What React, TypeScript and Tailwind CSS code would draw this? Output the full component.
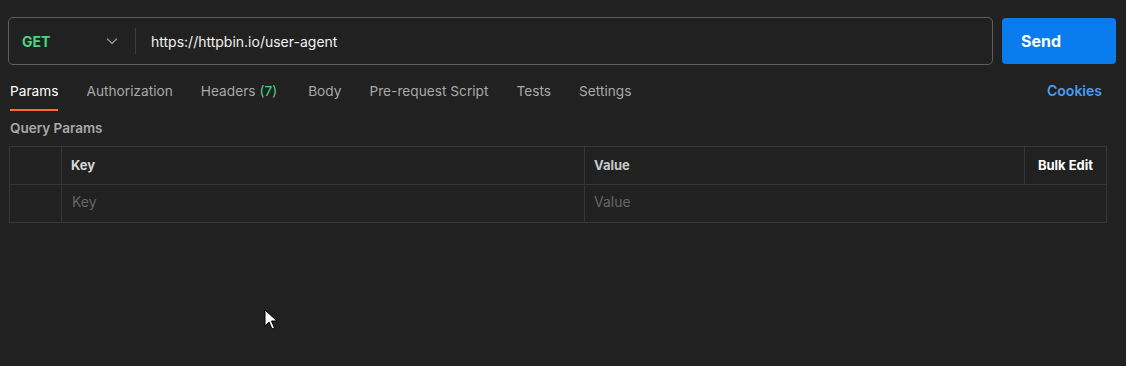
import React from "react";

const tabs = ["Params", "Authorization", "Headers", "Body", "Pre-request Script", "Tests", "Settings"];

export default function App() {
  return (
    <div
      className="relative w-[1126px] h-[366px] bg-[#212121] overflow-hidden"
      style={{ fontFamily: "Inter, 'Noto Sans', sans-serif" }}
    >
      {/* URL row */}
      <div className="flex items-center pt-[17px] pl-[8px]">
        <div className="flex items-center w-[985px] h-[48px] border border-[#5e5e5e] rounded-[5px]">
          <div className="flex items-center w-[126px] pl-[13px] pr-[16px] justify-between">
            <span className="text-[14px] font-bold text-[#4fd182]">GET</span>
            <svg width="14" height="14" viewBox="0 0 14 14" fill="none">
              <path d="M2.5 5 L7 9.5 L11.5 5" stroke="#9a9a9a" strokeWidth="1.2" strokeLinecap="round" strokeLinejoin="round" />
            </svg>
          </div>
          <div className="w-px h-[26px] bg-[#3d3d3d]" />
          <span className="ml-[15px] text-[14px] text-[#f2f2f2]">https://httpbin.io/user-agent</span>
        </div>
        <button className="ml-[9px] w-[114px] h-[46px] rounded-[4px] bg-[#097bed] text-left pl-[19px] text-[16px] font-bold text-white">
          Send
        </button>
      </div>

      {/* Tabs */}
      <div className="flex items-start justify-between mt-[9px] pl-[10px] pr-[24px]">
        <div className="flex gap-[28px]">
          {tabs.map((t, i) => (
            <div
              key={t}
              className={
                i === 0
                  ? "pt-[7px] pb-[8px] leading-5 text-[13.7px] text-white border-b-2 border-[#ff6c37]"
                  : t === "Headers"
                  ? "pt-[7px] pb-[8px] mr-[3px] leading-5 text-[13.7px] text-[#a8a8a8] border-b-2 border-transparent"
                  : "pt-[7px] pb-[8px] leading-5 text-[13.7px] text-[#a8a8a8] border-b-2 border-transparent"
              }
            >
              {t}
              {t === "Headers" && <span className="text-[#4fd182]"> (7)</span>}
            </div>
          ))}
        </div>
        <div className="pt-[7px] leading-5 text-[14px] font-semibold text-[#4a9df2]">Cookies</div>
      </div>

      {/* Query Params */}
      <div className="mt-[8px] pl-[10px] text-[13.5px] leading-[18px] font-semibold text-[#a9a9a9]">Query Params</div>

      {/* Table */}
      <div className="mt-[9px] ml-[9px] w-[1098px] border border-[#363636] text-[13px]">
        <div className="flex h-[38px] border-b border-[#363636]">
          <div className="w-[52px] border-r border-[#363636]" />
          <div className="w-[523px] border-r border-[#363636] flex items-center pl-[9px] font-bold text-[#d8d8d8]">Key</div>
          <div className="w-[440px] border-r border-[#363636] flex items-center pl-[9px] font-bold text-[#c8c8c8]">Value</div>
          <div className="flex-1 flex items-center justify-center font-bold text-white">Bulk Edit</div>
        </div>
        <div className="flex h-[37px] text-[14px]">
          <div className="w-[52px] border-r border-[#363636]" />
          <div className="w-[523px] border-r border-[#363636] flex items-center pl-[10px] pb-[4px] text-[#676767]">Key</div>
          <div className="flex-1 flex items-center pl-[9px] pb-[4px] text-[#676767]">Value</div>
        </div>
      </div>

      {/* Mouse cursor */}
      <svg className="absolute left-[264px] top-[309px]" width="14" height="22" viewBox="0 0 14 22">
        <path d="M1 1 L1 17 L5 13 L8 20 L10.5 19 L7.5 12 L13 12 Z" fill="#ffffff" stroke="#000000" strokeWidth="1" strokeLinejoin="round" />
      </svg>
    </div>
  );
}
